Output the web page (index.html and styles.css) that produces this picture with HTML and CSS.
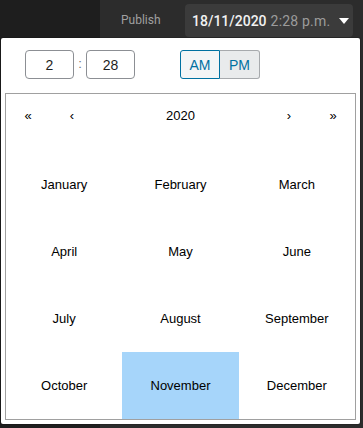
FILE: index.html
```html
<!DOCTYPE html>
<html>
<head>
<meta charset="utf-8">
<link rel="stylesheet" href="styles.css">
</head>
<body>
<div class="page">
  <div class="sidebar"></div>
  <div class="main">
    <div class="topbar">
      <span class="label">Publish</span>
      <button class="date-btn">
        <span class="date">18/11/2020</span>
        <span class="time">2:28 p.m.</span>
        <svg class="caret" width="10" height="6" viewBox="0 0 10 6"><path d="M0 0H10L5 6Z" fill="#fff"/></svg>
      </button>
    </div>
  </div>
  <div class="popover">
    <div class="time-row">
      <div class="time-fields">
        <input class="field" value="2">
        <span class="colon">:</span>
        <input class="field" value="28">
      </div>
      <div class="ampm">
        <button class="seg seg-am">AM</button>
        <button class="seg seg-pm">PM</button>
      </div>
    </div>
    <div class="calendar">
      <div class="nav">
        <button class="nav-btn">«</button>
        <button class="nav-btn">‹</button>
        <span class="nav-label">2020</span>
        <button class="nav-btn">›</button>
        <button class="nav-btn">»</button>
      </div>
      <div class="months">
        <div class="tile">January</div>
        <div class="tile">February</div>
        <div class="tile">March</div>
        <div class="tile">April</div>
        <div class="tile">May</div>
        <div class="tile">June</div>
        <div class="tile">July</div>
        <div class="tile">August</div>
        <div class="tile">September</div>
        <div class="tile">October</div>
        <div class="tile tile-active">November</div>
        <div class="tile">December</div>
      </div>
    </div>
  </div>
</div>
</body>
</html>
```
FILE: styles.css
```css
* { box-sizing: border-box; }
html, body { margin: 0; padding: 0; }
body { width: 363px; height: 428px; overflow: hidden; background: #1e1e1e; }
.page { position: relative; display: flex; height: 428px; }
.sidebar { width: 100px; background: #1e1e1e; }
.main { flex: 1; background: #2c2c2c; }
.topbar { display: flex; align-items: center; height: 41px; padding: 4px 10px 4px 21px; }
.label { font-family: Roboto, "Noto Sans", sans-serif; font-size: 12px; color: #a0a0a0; width: 64px; margin-top: -2px; }
.date-btn {
  display: flex; align-items: center; height: 33px; width: 168px;
  align-self: flex-start; white-space: nowrap;
  background: #3b3b3b; border: none; border-radius: 4px; padding: 0 0 0 7px;
  font-family: Roboto, "Noto Sans", sans-serif; font-size: 14px; font-weight: 500;
}
.date { color: #f2f2f2; }
.time { color: #9c9c9c; margin-left: 4px; font-weight: 400; letter-spacing: 0.2px; }
.caret { margin-left: 9px; flex-shrink: 0; }
.popover {
  position: absolute; left: 1px; top: 38px; width: 359px; height: 386px;
  background: #fff; border-radius: 2px;
  box-shadow: 0 0 0 1px rgba(0,0,0,0.15);
  padding: 12px 4px 4px;
}
.time-row { display: flex; align-items: center; height: 29px; padding-left: 20px; margin-bottom: 14px; }
.time-fields { display: flex; align-items: center; }
.field {
  width: 49px; height: 29px; border: 1px solid #8c8f94; border-radius: 4px;
  text-align: center; font-family: Arial, "Liberation Sans", sans-serif; font-size: 14px; color: #1e1e1e;
  padding: 0; outline: none; background: #fff;
}
.colon { width: 12px; text-align: center; color: #757575; font-family: Arial, "Liberation Sans", sans-serif; font-size: 13px; margin-top: -2px; }
.ampm { display: flex; margin-left: 45px; }
.seg {
  width: 40px; height: 29px; font-family: Arial, "Liberation Sans", sans-serif; font-size: 14px;
  color: #0071a1; padding: 0; margin: 0;
}
.seg-am { background: #f3f5f6; border: 1px solid #0071a1; border-radius: 3px 0 0 3px; }
.seg-pm { background: #e9ebec; border: 1px solid #a7aaad; border-left: none; border-radius: 0 3px 3px 0; }
.calendar {
  border: 1px solid #a0a0a0; height: 327px;
  font-family: Arial, "Liberation Sans", sans-serif; font-size: 13px; color: #000;
}
.nav { display: flex; align-items: center; height: 43px; margin-bottom: 14px; }
.nav-btn {
  width: 44px; height: 43px; background: none; border: none; padding: 0;
  font-family: Arial, "Liberation Sans", sans-serif; font-size: 13px; color: #000;
}
.nav-label { flex: 1; text-align: center; font-size: 13px; }
.months { display: grid; grid-template-columns: repeat(3, 1fr); grid-auto-rows: 67px; }
.tile { display: flex; align-items: center; justify-content: center; }
.tile-active { background: #a6d5fa; }
```
